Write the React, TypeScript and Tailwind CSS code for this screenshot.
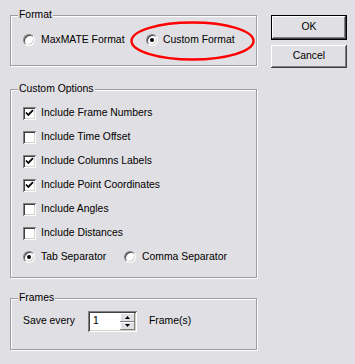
import React from "react";

const sunken =
  "shadow-[inset_1px_1px_#808080,inset_-1px_-1px_#ffffff,inset_2px_2px_#404040,inset_-2px_-2px_#d4d0c8]";

function Checkbox({ checked, label }: { checked?: boolean; label: string }) {
  return (
    <div className="flex items-center h-[24px]">
      <div className={`w-[13px] h-[13px] bg-white flex items-center justify-center ${sunken}`}>
        {checked && (
          <svg width="13" height="13" viewBox="0 0 13 13">
            <path d="M3 5.5 L5.3 8 L10 3.2" fill="none" stroke="#000" strokeWidth="1.8" />
          </svg>
        )}
      </div>
      <span className="ml-[5px]">{label}</span>
    </div>
  );
}

function Radio({ checked }: { checked?: boolean }) {
  return (
    <div className="w-[12px] h-[12px] rounded-full border border-t-[#808080] border-l-[#808080] border-b-white border-r-white bg-white flex items-center justify-center shadow-[inset_1px_1px_#404040,inset_-1px_-1px_#d4d0c8]">
      {checked && <div className="w-[4px] h-[4px] rounded-full bg-black" />}
    </div>
  );
}

function Group({
  title,
  className,
  children,
}: {
  title: string;
  className?: string;
  children: React.ReactNode;
}) {
  return (
    <div
      className={`relative w-[247px] border border-[#9d9da1] shadow-[1px_1px_0_#ffffff,inset_1px_1px_0_#ffffff] ${className ?? ""}`}
    >
      <span className="absolute left-[7px] top-[-8px] leading-[14px] px-[1px] bg-[#e0dfe3]">
        {title}
      </span>
      {children}
    </div>
  );
}

const btn =
  "w-[76px] flex items-center justify-center bg-[#e0dfe3] shadow-[inset_-1px_-1px_#404040,inset_1px_1px_#ffffff,inset_-2px_-2px_#808080,inset_2px_2px_#e0dfe3]";

export default function App() {
  return (
    <div className="w-[355px] h-[364px] bg-[#e0dfe3] font-['Liberation_Sans',Arial,sans-serif] text-[10.4px] text-black leading-none">
      <div className="flex items-start pt-[15px] pl-[10px]">
        <div className="flex flex-col">
          <Group title="Format" className="h-[51px]">
            <div className="flex items-center pl-[12px] pt-[17px] h-[31px]">
              <div className="flex items-center w-[123px]">
                <Radio />
                <span className="ml-[6px]">MaxMATE Format</span>
              </div>
              <div className="flex items-center">
                <Radio checked />
                <span className="ml-[5px]">Custom Format</span>
              </div>
            </div>
            <svg
              className="absolute left-[119px] top-[5px]"
              width="125"
              height="40"
              viewBox="0 0 125 40"
            >
              <ellipse cx="62.5" cy="20" rx="61" ry="18.5" fill="none" stroke="#ff0000" strokeWidth="2.4" />
            </svg>
          </Group>

          <Group title="Custom Options" className="h-[189px] mt-[23px]">
            <div className="flex flex-col pl-[12px] pt-[11px]">
              <Checkbox checked label="Include Frame Numbers" />
              <Checkbox label="Include Time Offset" />
              <Checkbox checked label="Include Columns Labels" />
              <Checkbox checked label="Include Point Coordinates" />
              <Checkbox label="Include Angles" />
              <Checkbox label="Include Distances" />
              <div className="flex items-center h-[24px]">
                <div className="flex items-center w-[101px]">
                  <Radio checked />
                  <span className="ml-[6px]">Tab Separator</span>
                </div>
                <div className="flex items-center">
                  <Radio />
                  <span className="ml-[6px]">Comma Separator</span>
                </div>
              </div>
            </div>
          </Group>

          <Group title="Frames" className="h-[52px] mt-[20px]">
            <div className="flex items-center pl-[12px] pt-[12px]">
              <span className="w-[65px]">Save every</span>
              <div className={`w-[49px] h-[21px] bg-white flex items-center pl-[5px] pr-[2px] ${sunken}`}>
                <span className="flex-1">1</span>
                <div className="flex flex-col w-[15px] h-[17px]">
                  <div className="flex-1 flex items-center justify-center bg-[#e0dfe3] shadow-[inset_-1px_-1px_#808080,inset_1px_1px_#ffffff]">
                    <svg width="5" height="3" viewBox="0 0 5 3">
                      <path d="M2.5 0 L5 3 L0 3 Z" fill="#000" />
                    </svg>
                  </div>
                  <div className="flex-1 flex items-center justify-center bg-[#e0dfe3] shadow-[inset_-1px_-1px_#808080,inset_1px_1px_#ffffff]">
                    <svg width="5" height="3" viewBox="0 0 5 3">
                      <path d="M0 0 L5 0 L2.5 3 Z" fill="#000" />
                    </svg>
                  </div>
                </div>
              </div>
              <span className="ml-[12px]">Frame(s)</span>
            </div>
          </Group>
        </div>

        <div className="flex flex-col ml-[14px]">
          <button className={`${btn} h-[25px] border border-black`}>OK</button>
          <button className={`${btn} h-[23px] mt-[5px]`}>Cancel</button>
        </div>
      </div>
    </div>
  );
}
